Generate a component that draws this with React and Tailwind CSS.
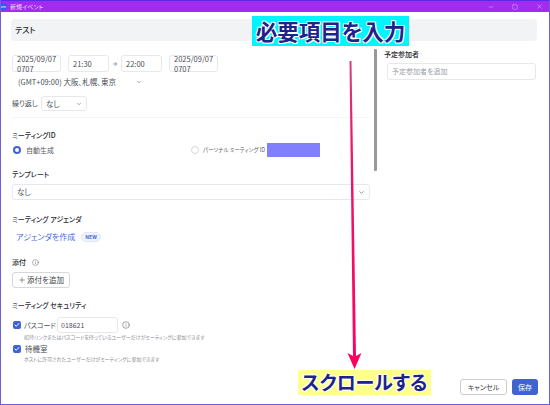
import React from 'react';
import { ArrowRight, Check, ChevronDown, Info, Minus, Plus, Square, X } from 'lucide-react';

const jp = "font-['Noto_Sans_CJK_JP','Noto_Sans',sans-serif]";
const halo = '[text-shadow:1px_1px_0_#fff,-1px_-1px_0_#fff,1px_-1px_0_#fff,-1px_1px_0_#fff]';

const Field = ({ className, children }) => (
  <div className={`flex items-center border border-[#e6e8ec] rounded-[3px] bg-white text-[#4a4f57] ${className}`}>
    {children}
  </div>
);

const Label = ({ className = '', children }) => (
  <div className={`text-[7px] leading-[10px] font-medium text-[#26292e] ${className}`}>{children}</div>
);

const DateBox = () => (
  <Field className="w-[49px] h-[17px] pl-[4px] text-[7.5px] leading-[10px]">
    <div>
      2025/09/07
      <br />
      0707
    </div>
  </Field>
);

const CheckBox = () => (
  <div className="w-[8px] h-[8px] rounded-[2px] bg-[#3f63d2] flex items-center justify-center shrink-0">
    <Check className="w-[6px] h-[6px] text-white" strokeWidth={4} />
  </div>
);

const Overlays = () => (
  <>
    <div className={`absolute left-[251px] top-[16px] w-[157px] h-[30px] bg-[#00f6ff] flex items-center justify-center text-[21.5px] font-bold text-[#1d2388] whitespace-nowrap ${halo}`}>
      必要項目を入力
    </div>
    <svg className="absolute left-[339px] top-[58px]" width="24" height="314" viewBox="0 0 24 314">
      <defs>
        <linearGradient id="arrowFill" x1="0" y1="0" x2="0" y2="1">
          <stop offset="0" stopColor="#d8407f" />
          <stop offset="0.25" stopColor="#e8186e" />
          <stop offset="1" stopColor="#ff0060" />
        </linearGradient>
      </defs>
      <path d="M9.5 3 L11.5 3 L16 298 L21.5 295 L14.5 311 L7.5 295 L13 298 Z" fill="url(#arrowFill)" />
    </svg>
    <div className={`absolute left-[297px] top-[370px] w-[133px] h-[25px] bg-[#ffff8c] flex items-center justify-center text-[19px] font-bold text-[#1d2388] whitespace-nowrap ${halo}`}>
      スクロールする
    </div>
  </>
);

export default function App() {
  return (
    <div className={`relative w-[550px] h-[405px] bg-white border-x border-b border-[#6a5fd8] overflow-hidden flex flex-col [font-feature-settings:'palt'] ${jp}`}>
      <header className="h-[12px] shrink-0 -mx-px bg-[#a32bf0] border-t border-[#5b2be8] flex items-center text-[#f0dcff]">
        <div className="w-[7px] h-[7px] rounded-r-[2px] bg-[#2d5cf0] text-[3.5px] leading-[7px] text-white text-center">zm</div>
        <span className="ml-[3px] text-[6px] leading-none">新規イベント</span>
        <div className="ml-auto flex items-center gap-[18px] pr-[7px]">
          <Minus className="w-[6px] h-[6px]" strokeWidth={1.5} />
          <Square className="w-[6px] h-[6px]" strokeWidth={1.5} />
          <X className="w-[7px] h-[7px]" strokeWidth={1.5} />
        </div>
      </header>

      <div className="mt-[7px] ml-[10px] mr-[12px] h-[22px] shrink-0 rounded-[4px] bg-[#f1f3f5] flex items-center pl-[4px] text-[8px] font-medium text-[#26292e]">
        テスト
      </div>

      <div className="flex flex-1 min-h-0">
        <main className="w-[358px] ml-[11px] shrink-0 flex flex-col">
          <div className="mt-[14px] flex items-center">
            <DateBox />
            <Field className="w-[41px] h-[17px] ml-[7px] pl-[4px] text-[7.5px]">21:30</Field>
            <span className="w-[12px] flex justify-center text-[#4a4f57]">
              <ArrowRight className="w-[6px] h-[6px]" strokeWidth={2} />
            </span>
            <Field className="w-[41px] h-[17px] pl-[4px] text-[7.5px]">22:00</Field>
            <div className="ml-[7px]"><DateBox /></div>
          </div>

          <div className="mt-[4px] h-[12px] w-[130px] pl-[6px] flex items-center justify-between text-[7.5px] text-[#4a4f57]">
            <span>(GMT+09:00) 大阪、札幌、東京</span>
            <ChevronDown className="w-[6px] h-[6px]" strokeWidth={2} />
          </div>

          <div className="mt-[8px] flex items-center">
            <span className="w-[29px] shrink-0 text-[7px] text-[#4a4f57] whitespace-nowrap">繰り返し</span>
            <Field className="w-[46px] h-[15px] px-[4px] justify-between text-[7.5px]">
              なし
              <ChevronDown className="w-[6px] h-[6px]" strokeWidth={2} />
            </Field>
          </div>

          <div className="mt-[6px] h-px bg-[#f4f5f6]" />

          <Label className="mt-[12px]">ミーティングID</Label>
          <div className="mt-[3px] h-[14px] flex items-center text-[7px] text-[#5c6068]">
            <span className="w-[8px] h-[8px] ml-[1px] rounded-full border-[2.5px] border-[#3f63d2]" />
            <span className="ml-[5px] w-[165px] shrink-0">自動生成</span>
            <span className="w-[8px] h-[8px] rounded-full border border-[#d5d8dd] shrink-0" />
            <span className="ml-[4px] w-[64px] shrink-0 text-[5.5px] whitespace-nowrap">パーソナル ミーティング ID</span>
            <span className="w-[53px] h-[14px] bg-[#8080ff] shrink-0" />
          </div>

          <Label className="mt-[12px]">テンプレート</Label>
          <Field className="mt-[5px] h-[16px] px-[4px] justify-between text-[7.5px]">
            なし
            <ChevronDown className="w-[7px] h-[7px]" strokeWidth={2} />
          </Field>

          <Label className="mt-[14px]">ミーティング アジェンダ</Label>
          <div className="mt-[7px] ml-[4px] h-[12px] flex items-center">
            <span className="text-[8px] text-[#4a6fd0]">アジェンダを作成</span>
            <span className="ml-[6px] h-[10px] px-[3px] rounded-full border border-[#dfe7f8] bg-[#eef3fd] text-[5px] leading-[8px] font-bold text-[#3f63d2]">NEW</span>
          </div>

          <div className="mt-[14px] flex items-center">
            <Label>添付</Label>
            <Info className="ml-[6px] w-[7px] h-[7px] text-[#4a4f57]" strokeWidth={1.5} />
          </div>
          <div className="mt-[5px] w-[58px] h-[16px] border border-[#d5d8dd] rounded-[3px] flex items-center justify-center text-[7.5px] text-[#3a3e45]">
            <Plus className="w-[8px] h-[8px] mr-[1px]" strokeWidth={1.5} />
            添付を追加
          </div>

          <Label className="mt-[12px]">ミーティング セキュリティ</Label>

          <div className="mt-[7px] h-[16px] flex items-center">
            <div className="ml-[1px]"><CheckBox /></div>
            <span className="ml-[3px] w-[33px] shrink-0 text-[7px] text-[#4a4f57] whitespace-nowrap">パスコード</span>
            <Field className="w-[61px] h-[16px] pl-[3px] text-[7px]">018621</Field>
            <Info className="ml-[4px] w-[8px] h-[8px] text-[#4a4f57]" strokeWidth={1.5} />
          </div>
          <div className="ml-[12px] text-[5px] leading-[8px] text-[#8a8e95] whitespace-nowrap">
            招待リンクまたはパスコードを持っているユーザーだけがミーティングに参加できます
          </div>

          <div className="mt-[3px] h-[9px] flex items-center">
            <div className="ml-[1px]"><CheckBox /></div>
            <span className="ml-[4px] text-[7.5px] text-[#4a4f57]">待機室</span>
          </div>
          <div className="ml-[12px] mt-[2px] text-[5px] leading-[8px] text-[#8a8e95] whitespace-nowrap">
            ホストに許可されたユーザーだけがミーティングに参加できます
          </div>
        </main>

        <div className="ml-[4px] mt-[8px] w-[3px] h-[122px] shrink-0 bg-[#999999] rounded-[1px]" />

        <aside className="ml-[7px] w-[152px] shrink-0 flex flex-col">
          <Label className="mt-[8px]">予定参加者</Label>
          <Field className="mt-[4px] ml-[3px] h-[17px] pl-[4px] text-[7px] !text-[#9a9ea5]">予定参加者を追加</Field>
          <div className="mt-auto mb-[9px] -ml-[66px] -mr-[2px] flex justify-end gap-[5px]">
            <div className="w-[47px] h-[16px] border border-[#c9ccd2] rounded-[3px] flex items-center justify-center text-[7px] text-[#3a3e45]">キャンセル</div>
            <div className="w-[26px] h-[16px] rounded-[3px] bg-[#3f63d2] flex items-center justify-center text-[7px] text-white">保存</div>
          </div>
        </aside>
      </div>

      <Overlays />
    </div>
  );
}
